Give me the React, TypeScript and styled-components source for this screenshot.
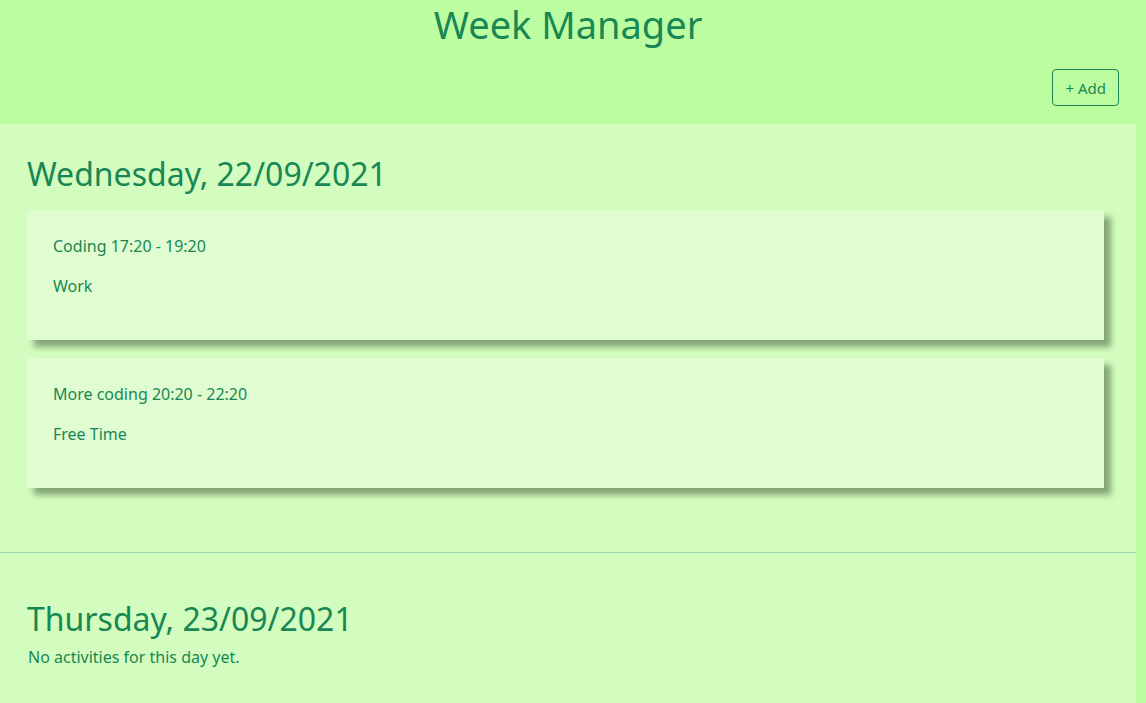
import React from "react";
import styled, { createGlobalStyle } from "styled-components";

type Activity = { id: number; name: string; start: string; end: string; category: string };
type Day = { id: number; label: string; activities: Activity[] };

const days: Day[] = [
    {
        id: 1,
        label: "Wednesday, 22/09/2021",
        activities: [
            { id: 1, name: "Coding", start: "17:20", end: "19:20", category: "Work" },
            { id: 2, name: "More coding", start: "20:20", end: "22:20", category: "Free Time" },
        ],
    },
    { id: 2, label: "Thursday, 23/09/2021", activities: [] },
];

const App: React.FC = () => {
    return (
        <>
            <GlobalStyle />
            <Page>
                <Header>
                    <Title>Week Manager</Title>
                    <Toolbar>
                        <AddButton type="button">+ Add</AddButton>
                    </Toolbar>
                </Header>
                <Main>
                    {days.map((day, i) => (
                        <DaySection key={day.id} $first={i === 0}>
                            <DayTitle>{day.label}</DayTitle>
                            {day.activities.length === 0 ? (
                                <Empty>No activities for this day yet.</Empty>
                            ) : (
                                day.activities.map(a => (
                                    <Card key={a.id}>
                                        <CardLine>{`${a.name} ${a.start} - ${a.end}`}</CardLine>
                                        <CardLine>{a.category}</CardLine>
                                    </Card>
                                ))
                            )}
                        </DaySection>
                    ))}
                </Main>
            </Page>
        </>
    );
};

export default App;

const GlobalStyle = createGlobalStyle`
    html, body {
        margin: 0;
        padding: 0;
        background: #bdfda2;
        color: #198754;
        font-family: "Noto Sans", "Open Sans", sans-serif;
        overflow: hidden;
    }
    * {
        box-sizing: border-box;
    }
`;

const Page = styled.div`
    width: 1136px;
    height: 703px;
    display: flex;
    flex-direction: column;
`;

const Header = styled.header`
    display: flex;
    flex-direction: column;
    align-items: center;
    padding-top: 2px;
    padding-bottom: 18px;
`;

const Title = styled.h1`
    margin: 0 0 23px;
    font-size: 38px;
    font-weight: 400;
    line-height: 44px;
`;

const Toolbar = styled.div`
    align-self: stretch;
    display: flex;
    justify-content: flex-end;
    padding-right: 17px;
`;

const AddButton = styled.button`
    height: 37px;
    padding: 0 12px;
    background: transparent;
    border: 1px solid #198754;
    border-radius: 4px;
    color: #198754;
    font-family: inherit;
    font-size: 15px;
`;

const Main = styled.main`
    flex: 1;
    background: #d2fdbe;
`;

const DaySection = styled.section<{ $first: boolean }>`
    padding: ${p => (p.$first ? "30px 32px 46px 27px" : "46px 32px 30px 27px")};
    border-top: ${p => (p.$first ? "none" : "1px solid #9fd9ad")};
`;

const DayTitle = styled.h2`
    margin: 0 0 17px;
    font-size: 32px;
    font-weight: 400;
    line-height: 39px;
`;

const Card = styled.div`
    background: #dffdd0;
    padding: 24px 26px 26px;
    margin-bottom: 18px;
    box-shadow: 7px 7px 6px rgba(70, 95, 60, 0.55);
`;

const CardLine = styled.p`
    margin: 0 0 16px;
    font-size: 16px;
    line-height: 24px;
`;

const Empty = styled.p`
    margin: -10px 0 0 1px;
    font-size: 16px;
    line-height: 24px;
`;
